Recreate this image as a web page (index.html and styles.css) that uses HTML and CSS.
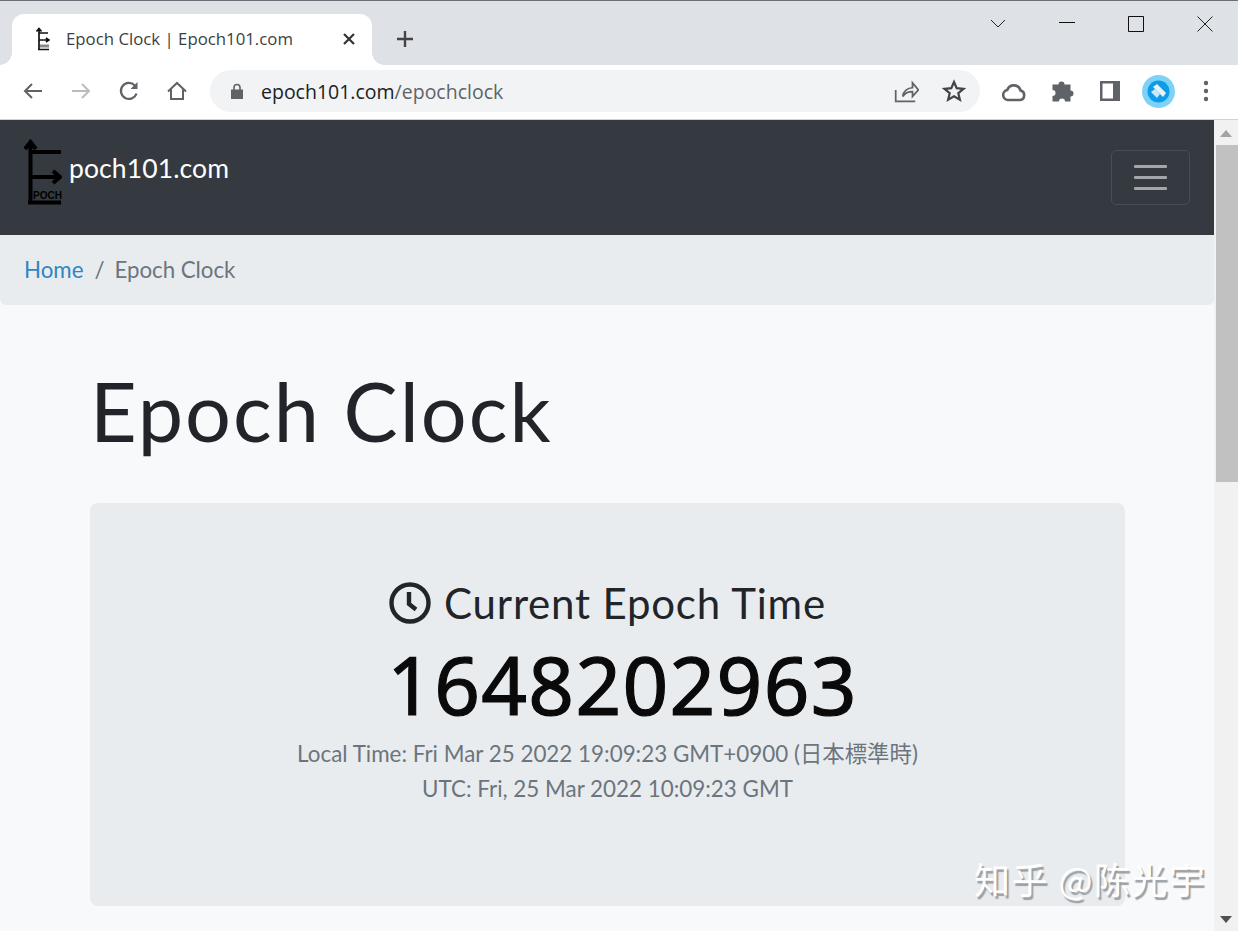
FILE: index.html
```html
<!DOCTYPE html>
<html lang="en">
<head>
<meta charset="utf-8">
<title>Epoch Clock | Epoch101.com</title>
<link rel="stylesheet" href="styles.css">
</head>
<body>
<div class="browser">
  <header class="tabstrip">
    <div class="tab">
      <svg class="favicon" viewBox="0 0 16 24"><path d="M5 23V2M2.500 4.500 5 1.500l2.500 3M5 6h9M5 13h9M12 11l3 2-3 2M4 22.500h11" fill="none" stroke="#111" stroke-width="1.700"/><path d="M6 17.500h9v3H6z" fill="#888"/></svg>
      <span class="tab-title">Epoch Clock | Epoch101.com</span>
      <svg class="tab-close" viewBox="0 0 14 14"><path d="M2 2l10 10M12 2 2 12" stroke="#333" stroke-width="2.200" fill="none"/></svg>
    </div>
    <svg class="new-tab" viewBox="0 0 20 20"><path d="M10 2v16M2 10h16" stroke="#444" stroke-width="2.400" fill="none"/></svg>
    <div class="win-controls">
      <svg class="win-btn" viewBox="0 0 16 16"><path d="M1 4l7 7 7-7" stroke="#222" fill="none"/></svg>
      <svg class="win-btn" viewBox="0 0 16 16"><path d="M0 6.500h16" stroke="#111" fill="none"/></svg>
      <svg class="win-btn" viewBox="0 0 16 16"><path d="M.5.500h15v15H.5z" stroke="#111" fill="none"/></svg>
      <svg class="win-btn" viewBox="0 0 16 16"><path d="M.5.500l15 15M15.500.500l-15 15" stroke="#222" fill="none"/></svg>
    </div>
  </header>
  <div class="toolbar">
    <nav class="nav-btns">
      <svg class="tool-icon" viewBox="0 0 24 24"><path d="M21 12H4M11 5l-7 7 7 7" fill="none" stroke="#5f6368" stroke-width="2"/></svg>
      <svg class="tool-icon" viewBox="0 0 24 24"><path d="M3 12h17M13 5l7 7-7 7" fill="none" stroke="#b9bcc0" stroke-width="2"/></svg>
      <svg class="tool-icon" viewBox="0 0 24 24"><path d="M19.500 14.500A8 8 0 1 1 17.800 6.500" fill="none" stroke="#5f6368" stroke-width="2.200"/><path d="M20.500 3v7h-7z" fill="#5f6368"/></svg>
      <svg class="tool-icon" viewBox="0 0 24 24"><path d="M3 12.500 12 4l9 8.500M6 10.500V20h12v-9.500" fill="none" stroke="#5f6368" stroke-width="2"/></svg>
    </nav>
    <div class="omnibox">
      <svg class="lock" viewBox="0 0 14 16"><path d="M1 6.500h12V16H1z" fill="#5f6368"/><path d="M4 7V4.500a3 3 0 0 1 6 0V7" fill="none" stroke="#5f6368" stroke-width="1.600"/></svg>
      <span class="url">epoch101.com<span class="url-path">/epochclock</span></span>
      <svg class="omni-icon" viewBox="0 0 24 24"><path d="M2.500 11v10.500h18M9 17c.5-5 4.500-8 9-8V4.500l5.500 6.500-5.500 6v-4.500c-4 0-7 1.500-9 4.500z" fill="none" stroke="#5f6368" stroke-width="1.600"/></svg>
      <svg class="omni-icon star" viewBox="0 0 24 24"><path d="M12 3l2.700 6.200 6.800.6-5.200 4.400 1.600 6.600-5.900-3.500-5.900 3.500 1.600-6.600-5.200-4.400 6.800-.6z" fill="none" stroke="#444" stroke-width="2.200"/></svg>
    </div>
    <div class="ext-btns">
      <svg class="tool-icon" viewBox="0 0 24 24"><path d="M6 21a5 5 0 0 1-.8-9.900 7 7 0 0 1 13.400.500A4.800 4.800 0 0 1 18 21z" fill="none" stroke="#5f6368" stroke-width="2.600"/></svg>
      <svg class="tool-icon" viewBox="0 0 24 24"><path d="M1.500 6.500h6a3 3 0 1 1 6 0h6v6a3 3 0 1 1 0 6v5h-5.500a3 3 0 1 0-6 0H1.500v-5.500a3 3 0 1 0 0-6z" fill="#5f6368" transform="translate(1 -1)"/></svg>
      <svg class="tool-icon" viewBox="0 0 24 24"><path d="M2 2h20v20H2z" fill="#5f6368"/><path d="M4.500 4.500H15v15H4.500z" fill="#fff"/></svg>
      <svg class="avatar" viewBox="0 0 33 33"><circle cx="16.500" cy="16.500" r="16.500" fill="#7fd2f7"/><circle cx="16.500" cy="16.500" r="11" fill="#0e9be8"/><path d="M11 12l4-3 9 9-3 4z" fill="#e8f4fb"/><path d="M9 17l4-3 5 5-3 4z" fill="#cfe6f4"/></svg>
      <svg class="menu-dots" viewBox="0 0 6 24"><circle cx="3" cy="4" r="2.200" fill="#5f6368"/><circle cx="3" cy="12" r="2.200" fill="#5f6368"/><circle cx="3" cy="20" r="2.200" fill="#5f6368"/></svg>
    </div>
  </div>
  <div class="viewport">
    <main class="page">
      <div class="navbar">
        <a class="brand">
          <svg class="brand-logo" viewBox="0 0 38 66">
            <path d="M6.500 65V4M1 10l5.500-7L12 10M6.500 13H37M6.500 38H35M29 32l7 6-7 6M4 63.500h33" fill="none" stroke="#000" stroke-width="4"/>
            <text class="logo-text" x="9" y="59.500">POCH</text>
          </svg>
          <span class="brand-name">poch101.com</span>
        </a>
        <button class="toggler" type="button" aria-label="Menu"><span class="bar"></span><span class="bar"></span><span class="bar"></span></button>
      </div>
      <ol class="breadcrumb">
        <li class="crumb-link">Home</li>
        <li class="crumb-sep">/</li>
        <li class="crumb-active">Epoch Clock</li>
      </ol>
      <div class="content">
        <h1 class="title">Epoch Clock</h1>
        <section class="card">
          <h2 class="card-title">
            <svg class="clock" viewBox="0 0 42 42"><circle cx="21" cy="21" r="18.500" fill="none" stroke="#212529" stroke-width="4.400"/><path d="M20 10v12l7 5.500" fill="none" stroke="#212529" stroke-width="4.400"/></svg>
            <span>Current Epoch Time</span>
          </h2>
          <div class="epoch">1648202963</div>
          <p class="time-line">Local Time: Fri Mar 25 2022 19:09:23 GMT+0900 (日本標準時)</p>
          <p class="time-line">UTC: Fri, 25 Mar 2022 10:09:23 GMT</p>
        </section>
      </div>
    </main>
    <aside class="scrollbar">
      <span class="arrow-up"></span>
      <span class="thumb"></span>
      <span class="arrow-down"></span>
    </aside>
    <div class="watermark">知乎 @陈光宇</div>
  </div>
</div>
</body>
</html>
```
FILE: styles.css
```css
* { box-sizing: border-box; }
html, body { margin: 0; height: 100%; overflow: hidden; }
body { font-family: "Lato", "Noto Sans CJK JP", sans-serif; background: #fff; }
.browser { width: 1238px; height: 931px; display: flex; flex-direction: column; }

.tabstrip { height: 65px; flex: none; background: #dee1e6; border-top: 1px solid #6b6f75; display: flex; align-items: flex-start; padding: 13px 0 0 12px; position: relative; }
.tab { width: 360px; height: 51px; background: #fff; border-radius: 12px 12px 0 0; display: flex; align-items: center; padding: 0 16px 2px 22px; position: relative; }
.tab::before, .tab::after { content: ""; position: absolute; bottom: 0; width: 12px; height: 12px; }
.tab::before { left: -12px; background: radial-gradient(circle at 0 0, #dee1e6 11.500px, #fff 12px); }
.tab::after { right: -12px; background: radial-gradient(circle at 100% 0, #dee1e6 11.500px, #fff 12px); }
.favicon { width: 16px; height: 26px; flex: none; }
.tab-title { font-family: "Open Sans", sans-serif; font-size: 16.800px; color: #3c4043; margin-left: 16px; flex: 1; white-space: nowrap; }
.tab-close { width: 14px; height: 14px; flex: none; }
.new-tab { width: 20px; height: 20px; margin: 15px 0 0 23px; flex: none; }
.win-controls { position: absolute; right: 0; top: 0; display: flex; padding-right: 25px; }
.win-btn { width: 16px; height: 16px; margin: 15px 0 0 53px; }
.win-btn:first-child { margin-left: 0; }

.toolbar { height: 55px; flex: none; background: #fff; border-bottom: 1px solid #d0d2d5; display: flex; align-items: center; padding: 0 20px 2px 21px; }
.nav-btns { display: flex; gap: 24px; }
.tool-icon { width: 24px; height: 24px; flex: none; }
.omnibox { width: 770px; height: 42px; margin-left: 21px; background: #f1f3f4; border-radius: 21px; display: flex; align-items: center; padding: 0 14px 0 20px; }
.lock { width: 14px; height: 16px; flex: none; }
.url { font-family: "Open Sans", sans-serif; font-size: 19.500px; color: #202124; margin-left: 17px; flex: 1; }
.url-path { color: #5f6368; }
.omni-icon { width: 26px; height: 26px; flex: none; }
.star { width: 24px; height: 24px; margin-left: 23px; }
.ext-btns { display: flex; align-items: center; margin-left: 22px; gap: 24px; }
.avatar { width: 33px; height: 33px; flex: none; margin-left: -4px; }
.menu-dots { width: 6px; height: 24px; margin-left: 4px; flex: none; }

.viewport { flex: 1; display: flex; position: relative; overflow: hidden; }
.page { flex: 1; background: #f8f9fa; overflow: hidden; min-width: 0; }
.navbar { height: 115px; background: #343a40; display: flex; justify-content: space-between; align-items: flex-start; padding: 19px 24px 0; }
.brand { display: flex; align-items: flex-start; }
.brand-logo { width: 38px; height: 66px; flex: none; }
.logo-text { font-family: "Liberation Sans", sans-serif; font-size: 10px; font-weight: 700; fill: #000; }
.brand-name { color: #fff; font-size: 26.500px; line-height: 32px; margin: 13px 0 0 7px; letter-spacing: .1px; }
.toggler { width: 79px; height: 55px; margin-top: 11px; background: none; border: 1px solid #484e54; border-radius: 5px; display: flex; flex-direction: column; align-items: center; justify-content: center; gap: 8px; padding: 0; }
.bar { width: 33px; height: 3px; background: #a4a6a9; border-radius: 1px; }
.breadcrumb { list-style: none; margin: 0; height: 70px; padding: 0 24px 2px; background: #e9ecef; border-radius: 0 0 6px 6px; display: flex; align-items: center; font-size: 22.300px; }
.crumb-link { color: #2f86c3; }
.crumb-sep { color: #6c757d; margin: 0 10px 0 11px; }
.crumb-active { color: #6c757d; letter-spacing: -.05px; }
.content { padding: 0 89px 0 90px; }
.title { margin: 51px 0 0 0; font-size: 81px; line-height: 110px; font-weight: 400; color: #212529; letter-spacing: 2px; }
.card { height: 403px; margin-top: 37px; background: #e9ecef; border-radius: 8px; padding-top: 70px; text-align: center; }
.card-title { margin: 0; font-size: 42px; line-height: 60px; font-weight: 400; color: #212529; display: flex; justify-content: center; align-items: center; gap: 13px; letter-spacing: .8px; }
.clock { width: 42px; height: 42px; flex: none; }
.epoch { font-family: "Noto Sans", sans-serif; font-size: 80px; line-height: 88px; font-weight: 400; -webkit-text-stroke: 1.200px #0a0a0a; color: #0a0a0a; margin: 7px 0 0 30px; letter-spacing: 1.300px; }
.time-line { margin: 0; font-size: 22.400px; line-height: 35px; color: #6c757d; }
.time-line:first-of-type { margin-top: 8px; }

.scrollbar { width: 24px; flex: none; background: #f1f1f1; display: flex; flex-direction: column; align-items: flex-end; position: relative; }
.arrow-up { margin: 10px 6px 0 0; border: 6px solid transparent; border-top: 0; border-bottom: 7px solid #a3a3a3; }
.thumb { width: 22px; height: 337px; background: #c1c1c1; margin-top: 8px; }
.arrow-down { margin: auto 6px 8px 0; border: 6px solid transparent; border-bottom: 0; border-top: 7px solid #505050; }

.watermark { position: absolute; left: 974px; top: 736px; font-family: "Noto Sans CJK SC", sans-serif; font-size: 36px; line-height: 44px; color: #fff; white-space: nowrap; text-shadow: 2px 3px 1px #9d9fa2; letter-spacing: 1.500px; }
```
